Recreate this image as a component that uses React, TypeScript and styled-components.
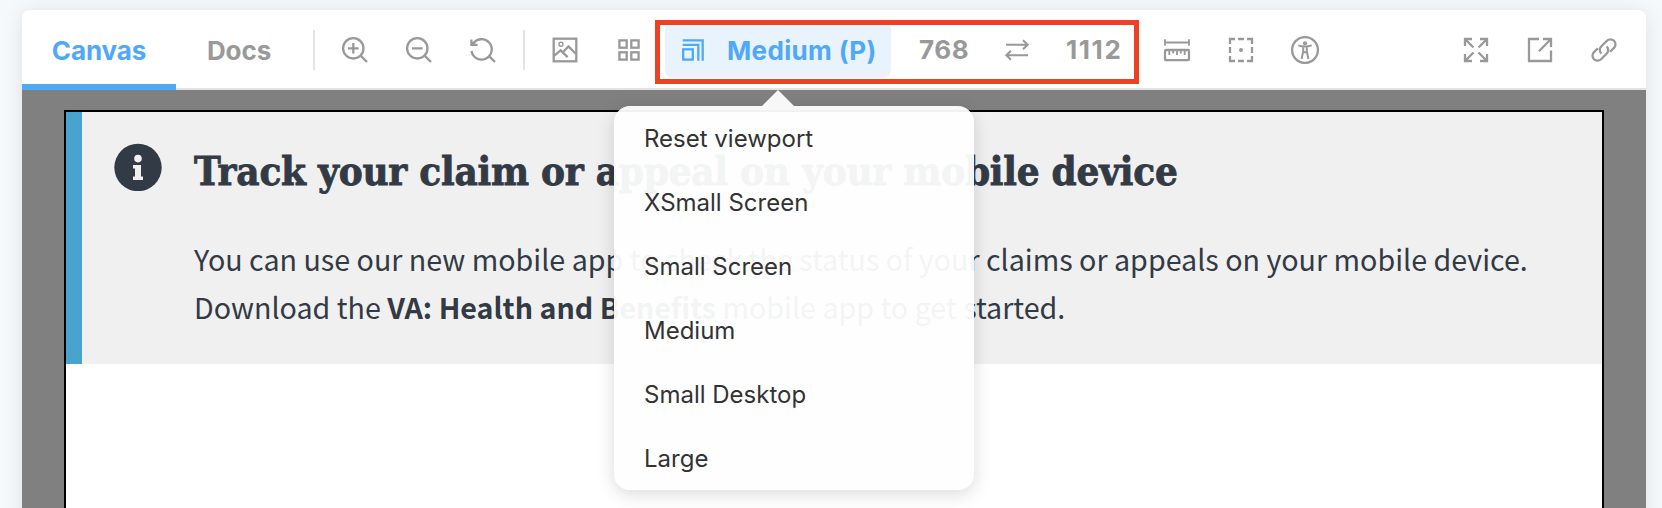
import React from 'react';
import styled, { createGlobalStyle } from 'styled-components';

const GlobalStyle = createGlobalStyle`
  * { box-sizing: border-box; }
  body { margin: 0; background: #f5f9fc; overflow: hidden; font-family: Inter, "Liberation Sans", sans-serif; }
  button { font: inherit; border: 0; background: none; padding: 0; margin: 0; color: inherit; }
`;

const Page = styled.main`
  height: 508px;
  padding: 10px 16px 0 22px;
  overflow: hidden;
`;

const Panel = styled.section`
  position: relative;
  display: flex;
  flex-direction: column;
  height: 520px;
  border-radius: 8px 8px 0 0;
  background: #fff;
  box-shadow: 0 2px 20px rgba(0, 0, 0, 0.1);
`;

const Toolbar = styled.header`
  display: flex;
  flex: none;
  height: 80px;
  border-bottom: 2px solid #e2e4e4;
  color: #999;
`;

const Tabs = styled.nav`
  display: flex;
  margin-right: 11px;
`;

const Tab = styled.button<{ $active?: boolean; $width: number }>`
  width: ${p => p.$width}px;
  height: 80px;
  padding-top: 6px;
  border-bottom: 6px solid ${p => (p.$active ? '#4fa8f8' : 'transparent')};
  color: ${p => (p.$active ? '#4fa8f8' : '#999')};
  font-size: 26px;
  font-weight: 700;
  letter-spacing: -0.1px;
`;

const Separator = styled.span`
  width: 2px;
  height: 40px;
  margin: 20px 0 0;
  background: #e4e4e4;
`;

const Tools = styled.div<{ $left?: number; $right?: number }>`
  display: flex;
  gap: 8px;
  height: 56px;
  margin: 12px ${p => p.$right ?? 0}px 0 ${p => p.$left ?? 0}px;
`;

const Tool = styled.button`
  display: flex;
  align-items: center;
  justify-content: center;
  width: 56px;
  height: 56px;
`;

const Viewport = styled.button`
  display: flex;
  align-items: center;
  width: 226px;
  height: 56px;
  margin: 12px 0 0;
  padding-left: 14px;
  gap: 20px;
  border-radius: 8px;
  background: #e9f3fe;
  color: #4fa8f8;
  font-size: 26px;
  font-weight: 700;
  letter-spacing: 0.35px;
  white-space: nowrap;
`;

const ViewportName = styled.span`
  padding-top: 1px;
`;

const Size = styled.span<{ $width: number; $left: number; $tracking: number }>`
  width: ${p => p.$width}px;
  margin-left: ${p => p.$left}px;
  line-height: 80px;
  font-size: 26px;
  font-weight: 700;
  letter-spacing: ${p => p.$tracking}px;
`;

const Highlight = styled.div`
  position: absolute;
  top: 10px;
  left: 633px;
  width: 484px;
  height: 64px;
  border: 5px solid #ee4023;
`;

const Spacer = styled.div`
  flex: 1;
`;

const Icon = styled.svg`
  flex: none;
  width: 28px;
  height: 28px;
  fill: none;
  stroke: currentColor;
  stroke-width: 2.3;
`;

const Canvas = styled.div`
  flex: 1;
  padding: 20px 42px 0;
  background: #808080;
`;

const Frame = styled.div`
  height: 100%;
  border: 2px solid #000;
  background: #fff;
`;

const Alert = styled.article`
  display: flex;
  height: 252px;
  padding-left: 32px;
  border-left: 16px solid #49a3cf;
  background: #f0f0f0;
  color: #323a45;
`;

const InfoIcon = styled.svg`
  flex: none;
  width: 48px;
  height: 48px;
  margin-top: 31px;
`;

const Message = styled.div`
  margin-left: 32px;
  white-space: nowrap;
`;

const Title = styled.h3`
  margin: 29px 0 0;
  font: bold 40px/60px "DejaVu Serif Condensed", "DejaVu Serif", serif;
  font-stretch: condensed;
  letter-spacing: -0.25px;
  -webkit-text-stroke: 0.8px currentColor;
`;

const Copy = styled.p`
  margin: 34px 0 0;
  font: 28.66px/48px "Noto Sans CJK SC", sans-serif;
`;

const Menu = styled.div`
  position: absolute;
  top: 96px;
  left: 592px;
  width: 360px;
  height: 384px;
  border-radius: 16px;
  background: rgba(254, 254, 254, 0.95);
  box-shadow: 0 4px 18px rgba(0, 0, 0, 0.15);
  color: #333;

  &::before {
    content: '';
    position: absolute;
    top: -16px;
    left: 148px;
    border: 16px solid transparent;
    border-top: 0;
    border-bottom-color: rgba(254, 254, 254, 0.95);
  }
`;

const MenuItem = styled.button`
  display: block;
  width: 100%;
  height: 64px;
  padding-left: 30px;
  text-align: left;
  font-size: 24px;
`;

const sizes = ['Reset viewport', 'XSmall Screen', 'Small Screen', 'Medium', 'Small Desktop', 'Large'];

const drawings = {
  zoomIn: <><circle cx="12.3" cy="12.3" r="10.2" /><path d="M19.6 19.6 26 26M7 12.3h10.6M12.3 7v10.6" /></>,
  zoomOut: <><circle cx="12.3" cy="12.3" r="10.2" /><path d="M19.6 19.6 26 26M7 12.3h10.6" /></>,
  zoomReset: <path d="M2.4 3.5v5.4h6.2M3.8 8.2a10.2 10.2 0 1 1-1.3 6.8M19.6 19.6 26 26" />,
  image: <><rect x="2.7" y="2.7" width="22.6" height="22.6" /><circle cx="10" cy="8.3" r="2" strokeWidth="1.4" /><path d="m3 20 6.5-5.7 7.2 6.8M12.5 15.5 17.5 10.5 25 18" /></>,
  grid: <><rect x="4.4" y="4.4" width="7.3" height="7.3" /><rect x="16.3" y="4.4" width="7.3" height="7.3" /><rect x="4.4" y="16.3" width="7.3" height="7.3" /><rect x="16.3" y="16.3" width="7.3" height="7.3" /></>,
  viewport: <><rect x="4.2" y="13.3" width="9.6" height="10.3" /><path d="M3.7 4.3h20v20.4" /><path d="M3.7 8.8h15.6v15.9" /></>,
  swap: <path d="M3 8.7h21M20 4.2l4.7 4.5-4.7 4.5M25 19.3H4M8 14.8l-4.7 4.5L8 23.8" strokeWidth="2" />,
  ruler: <><path d="M2 3.3v6.5M26 3.3v6.5M2 6.5h24M6.3 14v5M10.2 14v3.5M14 14v5M17.8 14v3.5M21.7 14v5" strokeWidth="1.8" /><rect x="2" y="14" width="24" height="10.2" rx="1" /></>,
  outline: <><path d="M3 8V3h5M20 3h5v5M25 20v5h-5M8 25H3v-5M11 3h6M11 25h6M3 11v6M25 11v6" /><circle cx="14" cy="14" r="2" fill="currentColor" stroke="none" /></>,
  accessibility: <><circle cx="14" cy="14" r="12.9" /><circle cx="14" cy="7.3" r="2.1" fill="currentColor" stroke="none" /><path d="M7.3 9.4q6.7 2.4 13.4 0M12.2 11v4.5L10.6 23M15.8 11v4.5l1.6 7.5M12.2 16.3h3.6" strokeWidth="2" /></>,
  expand: <path d="M3 10V3h7M3 3l8.5 8.5M18 3h7v7M25 3l-8.5 8.5M3 18v7h7M3 25l8.5-8.5M25 18v7h-7M25 25l-8.5-8.5" />,
  share: <path d="M13 3H3v22h22V14.5M17 3h8v8M25 3 13 15.2" />,
  link: <path d="M11.4 17.5C9.1 15.6 9.4 12.4 11.2 10.5l5.7-5.7a5 5 0 0 1 7.1 0 5 5 0 0 1 0 7.1l-3.9 3.9M16.6 10.5c2.3 1.9 2 5.1.2 7l-5.7 5.7a5 5 0 0 1-7.1 0 5 5 0 0 1 0-7.1l3.9-3.9" />,
};

const Glyph = ({ name }: { name: keyof typeof drawings }) => (
  <Icon viewBox="0 0 28 28" aria-hidden="true">{drawings[name]}</Icon>
);

const ToolButton = ({ name }: { name: keyof typeof drawings }) => (
  <Tool aria-label={name}><Glyph name={name} /></Tool>
);

export default function App() {
  return (
    <Page>
      <GlobalStyle />
      <Panel>
        <Toolbar>
          <Tabs>
            <Tab $active $width={154}>Canvas</Tab>
            <Tab $width={126}>Docs</Tab>
          </Tabs>
          <Separator />
          <Tools $left={12} $right={12}>
            <ToolButton name="zoomIn" />
            <ToolButton name="zoomOut" />
            <ToolButton name="zoomReset" />
          </Tools>
          <Separator />
          <Tools $left={12} $right={8}>
            <ToolButton name="image" />
            <ToolButton name="grid" />
          </Tools>
          <Viewport>
            <Glyph name="viewport" />
            <ViewportName>Medium (P)</ViewportName>
          </Viewport>
          <Size $left={28} $width={70} $tracking={0.6}>768</Size>
          <Tools><ToolButton name="swap" /></Tools>
          <Size $left={21} $width={63} $tracking={1.6}>1112</Size>
          <Tools $left={20}>
            <ToolButton name="ruler" />
            <ToolButton name="outline" />
            <ToolButton name="accessibility" />
          </Tools>
          <Spacer />
          <Tools $right={14}>
            <ToolButton name="expand" />
            <ToolButton name="share" />
            <ToolButton name="link" />
          </Tools>
        </Toolbar>
        <Canvas>
          <Frame>
            <Alert>
              <InfoIcon viewBox="0 0 48 48" aria-hidden="true">
                <circle cx="24" cy="24.5" r="23.7" fill="#323a45" />
                <circle cx="24" cy="15.6" r="3.8" fill="#f0f0f0" />
                <path d="M19 22h8v11.5h2V37H19v-3.5h2v-8h-2z" fill="#f0f0f0" />
              </InfoIcon>
              <Message>
                <Title>Track your claim or appeal on your mobile device</Title>
                <Copy>
                  You can use our new mobile app to check the status of your claims or appeals on your mobile device.
                  <br />
                  Download the <b>VA: Health and Benefits</b> mobile app to get started.
                </Copy>
              </Message>
            </Alert>
          </Frame>
        </Canvas>
        <Highlight />
        <Menu>
          {sizes.map(size => <MenuItem key={size}>{size}</MenuItem>)}
        </Menu>
      </Panel>
    </Page>
  );
}
